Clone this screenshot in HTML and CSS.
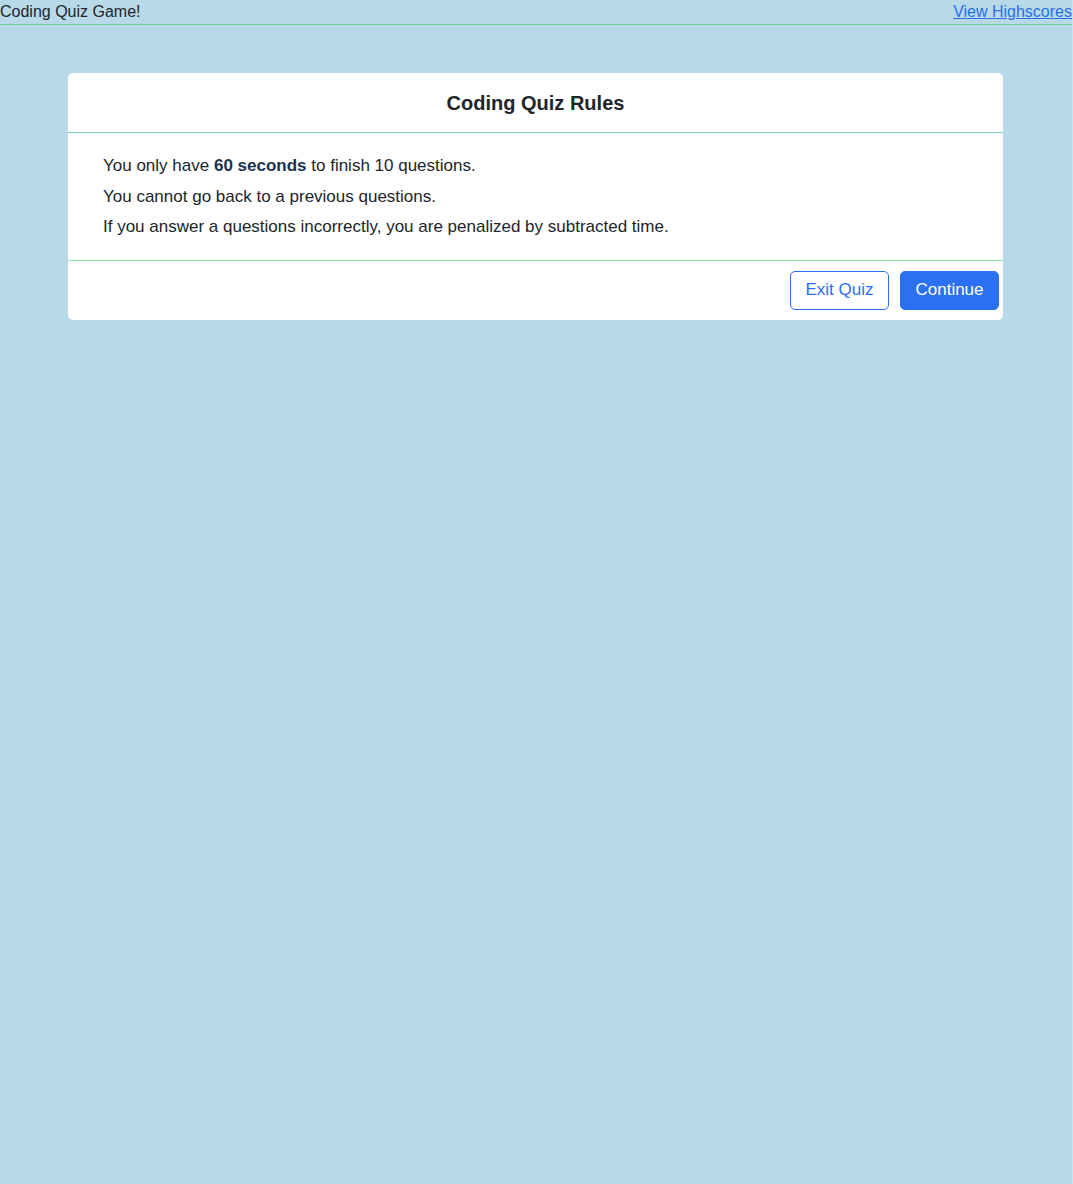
FILE: index.html
```html
<!DOCTYPE html>
<html lang="en">
<head>
<meta charset="utf-8">
<title>Coding Quiz Game</title>
<link rel="stylesheet" href="styles.css">
</head>
<body>
<header class="topbar">
  <span class="brand">Coding Quiz Game!</span>
  <a class="scores" href="#">View Highscores</a>
</header>
<main class="card">
  <div class="card-head"><h1 class="card-title">Coding Quiz Rules</h1></div>
  <div class="card-body">
    <p class="rule">You only have <strong class="em">60 seconds</strong> to finish 10 questions.</p>
    <p class="rule">You cannot go back to a previous questions.</p>
    <p class="rule">If you answer a questions incorrectly, you are penalized by subtracted time.</p>
  </div>
  <div class="card-foot">
    <button class="btn btn-outline">Exit Quiz</button>
    <button class="btn btn-fill">Continue</button>
  </div>
</main>
</body>
</html>
```

FILE: styles.css
```css
html, body {
  margin: 0;
  padding: 0;
}
body {
  background: #b8d9e8;
  font-family: "Liberation Sans", Arial, sans-serif;
  color: #212529;
  min-height: 1184px;
  box-sizing: border-box;
  border-right: 1px solid #c9e3ef;
}
.topbar {
  display: flex;
  justify-content: space-between;
  align-items: flex-start;
  height: 24px;
  border-bottom: 1px solid #6fcf97;
  font-size: 16px;
  line-height: 20px;
}
.brand {
  padding-top: 2px;
}
.scores {
  padding-top: 2px;
  color: #2a6fe8;
  text-decoration: underline;
}
.card {
  display: block;
  width: 935px;
  margin: 48px 0 0 68px;
  background: #fff;
  border-radius: 5px;
  overflow: hidden;
}
.card-head {
  border-bottom: 1px solid #7dcfc5;
  padding: 15px 16px 14px;
}
.card-title {
  margin: 0;
  text-align: center;
  font-size: 20px;
  line-height: 30px;
  font-weight: bold;
}
.card-body {
  padding: 20px 35px 20px;
  display: flex;
  flex-direction: column;
  gap: 5px;
}
.rule {
  margin: 0;
  font-size: 17px;
  line-height: 25.5px;
}
.em {
  color: #17334f;
}
.card-foot {
  border-top: 1px solid #8ee3aa;
  display: flex;
  justify-content: flex-end;
  gap: 11px;
  padding: 10px 4px 10px;
}
.btn {
  font-family: "Liberation Sans", Arial, sans-serif;
  font-size: 17px;
  height: 39px;
  padding: 0;
  white-space: nowrap;
  border-radius: 5px;
  cursor: pointer;
}
.btn-outline {
  background: #fff;
  color: #2b6ff2;
  border: 1px solid #2b6ff2;
  width: 99px;
}
.btn-fill {
  background: #2b6ff2;
  color: #fff;
  border: 1px solid #2b6ff2;
  width: 99px;
}
```
